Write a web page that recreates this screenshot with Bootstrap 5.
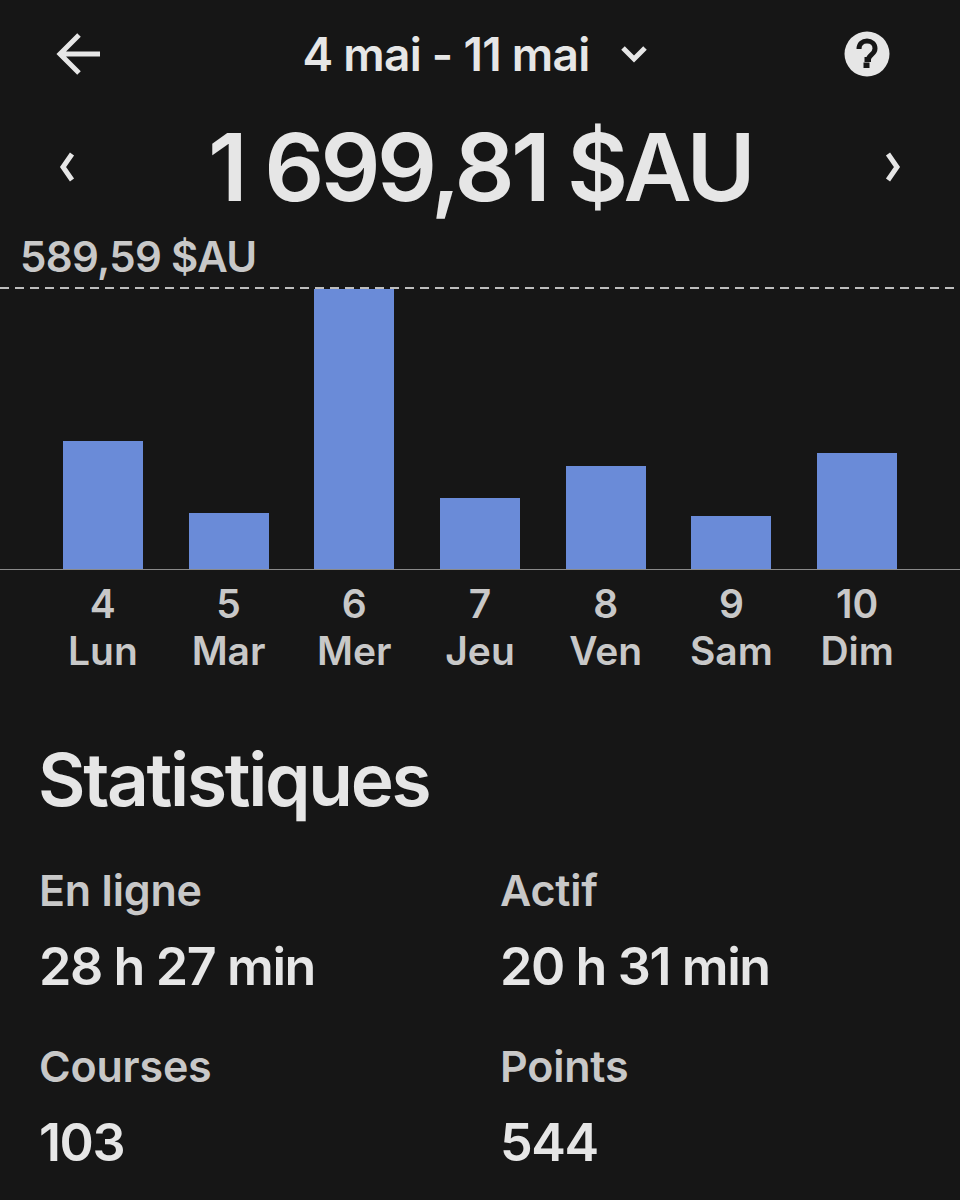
<!doctype html>
<html lang="fr"><head><meta charset="utf-8">
<link href="https://cdn.jsdelivr.net/npm/bootstrap@5.3.0/dist/css/bootstrap.min.css" rel="stylesheet">
<style>
html,body{background:#161616;margin:0}
body{width:960px;height:1200px;overflow:hidden;font-family:Inter,"Liberation Sans",sans-serif;color:#e6e6e6}
.topbar{height:108px;padding:0 70px 0 56px}
.range{font-size:46px;font-weight:600;letter-spacing:-.7px;line-height:48px}
.range-wrap{gap:30px;margin-left:4px}
.amount-row{height:112px;padding:6px 56px 0}
.amount{font-size:94px;font-weight:600;letter-spacing:-3.7px;line-height:106px;color:#e6e6e6}
.peak{height:67px;padding-left:20px;font-size:42px;font-weight:600;letter-spacing:-.7px;line-height:74px;color:#c8c8c8}
.plot{height:280px;padding:0 40px}
.dash{height:2px;background:repeating-linear-gradient(90deg,#bdbdbd 0 9px,transparent 9px 15px)}
.cols{display:grid;grid-template-columns:repeat(7,1fr);height:100%}
.colbox{display:flex;justify-content:center;align-items:flex-end}
.barfill{width:80px;background:#6a8bd8}
.axisline{height:1px;background:#8a8a8a}
.ticks{padding:0 40px;margin-top:10px}
.ticks .tick{text-align:center;font-size:39px;font-weight:600;line-height:47px;color:#c8c8c8}
.stat-title{font-size:73px;font-weight:600;letter-spacing:-2.3px;line-height:80px;margin:66px 0 0 38px;color:#e6e6e6}
.stats{margin:47px 0 0 39px;display:grid;grid-template-columns:461px 1fr;row-gap:47px}
.slabel{font-size:43px;font-weight:600;letter-spacing:-.2px;line-height:46px;color:#c8c8c8}
.sval{font-size:52px;font-weight:600;letter-spacing:-1.4px;line-height:58px;margin-top:25px;color:#e6e6e6}
</style></head><body>
<div class="topbar d-flex align-items-center justify-content-between">
<svg width="46" height="42" viewBox="0 0 46 42" fill="none" stroke="#e6e6e6" stroke-width="5"><path d="M44 21H5M23 2 4 21l19 19"/></svg>
<div class="range-wrap d-flex align-items-center"><span class="range">4 mai - 11 mai</span>
<svg width="28" height="18" viewBox="0 0 28 18" fill="none" stroke="#e6e6e6" stroke-width="5"><path d="M3 3l11 11L25 3"/></svg></div>
<svg width="46" height="46" viewBox="0 0 46 46"><circle cx="23" cy="23" r="22.5" fill="#e6e6e6"/><path d="M15 18c0-5 3.500-8 8-8s8 3 8 7.500c0 6-6.500 6-6.500 11H20.500" fill="none" stroke="#161616" stroke-width="5"/><rect x="19.500" y="31.500" width="6" height="5.500" fill="#161616"/></svg>
</div>
<div class="amount-row d-flex align-items-center justify-content-between">
<svg width="22" height="32" viewBox="0 0 22 32" fill="none" stroke="#e6e6e6" stroke-width="5"><path d="M16 3 7 16l9 13"/></svg>
<div class="amount">1 699,81 $AU</div>
<svg width="22" height="32" viewBox="0 0 22 32" fill="none" stroke="#e6e6e6" stroke-width="5"><path d="M6 3l9 13-9 13"/></svg>
</div>
<div class="peak">589,59 $AU</div>
<div class="dash"></div>
<div class="plot"><div class="cols">
<div class="colbox"><div class="barfill" style="height:128px"></div></div>
<div class="colbox"><div class="barfill" style="height:56px"></div></div>
<div class="colbox"><div class="barfill" style="height:280px"></div></div>
<div class="colbox"><div class="barfill" style="height:71px"></div></div>
<div class="colbox"><div class="barfill" style="height:103px"></div></div>
<div class="colbox"><div class="barfill" style="height:53px"></div></div>
<div class="colbox"><div class="barfill" style="height:116px"></div></div>
</div></div>
<div class="axisline"></div>
<div class="ticks cols" style="height:auto">
<div class="tick">4<br>Lun</div><div class="tick">5<br>Mar</div><div class="tick">6<br>Mer</div><div class="tick">7<br>Jeu</div><div class="tick">8<br>Ven</div><div class="tick">9<br>Sam</div><div class="tick">10<br>Dim</div>
</div>
<h2 class="stat-title">Statistiques</h2>
<div class="stats">
<div><div class="slabel">En ligne</div><div class="sval">28 h 27 min</div></div>
<div><div class="slabel">Actif</div><div class="sval">20 h 31 min</div></div>
<div><div class="slabel">Courses</div><div class="sval">103</div></div>
<div><div class="slabel">Points</div><div class="sval">544</div></div>
</div>
<script src="https://cdn.jsdelivr.net/npm/bootstrap@5.3.0/dist/js/bootstrap.bundle.min.js"></script>
</body></html>
